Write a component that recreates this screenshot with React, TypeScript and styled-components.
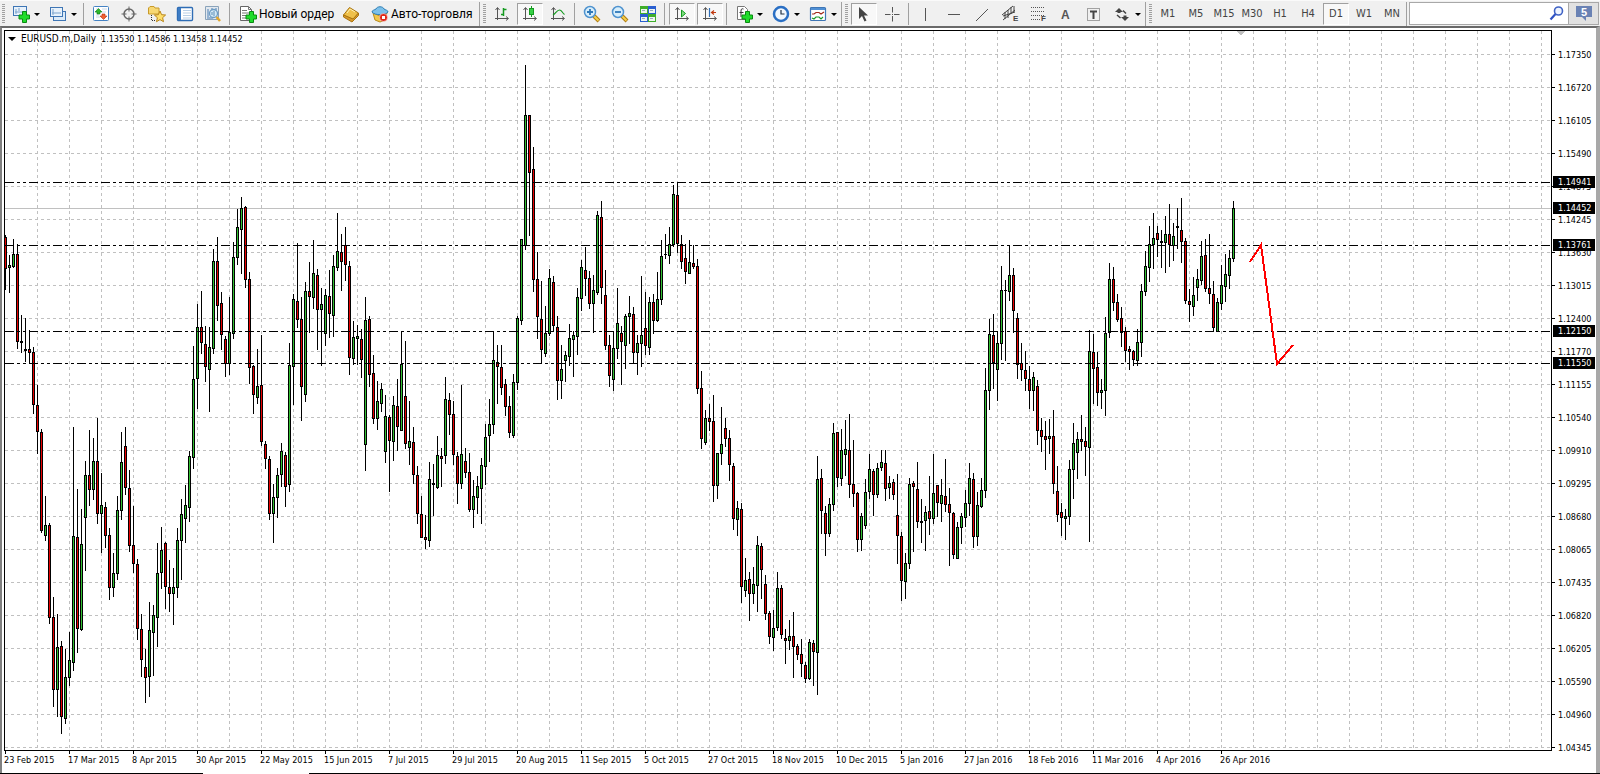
import React from "react";
import styled, { createGlobalStyle } from "styled-components";

const Global = createGlobalStyle`
  * { box-sizing: border-box; }
  body { margin: 0; background: #fff; }
`;

const UI_FONT = 'Roboto, "Noto Sans", sans-serif';
const CHART_FONT = '"DejaVu Sans Condensed", "DejaVu Sans", sans-serif';

const Page = styled.div`
  display: flex;
  flex-direction: column;
  min-height: 100vh;
  font-family: ${UI_FONT};
`;

const Toolbar = styled.header`
  display: flex;
  height: 26px;
  padding-top: 1px;
  background: #f0f0f0;
  border-top: 1px solid #fafafa;
`;

const Section = styled.div`
  display: flex;
  flex: none;
  align-items: center;
  border-right: 1px solid #a0a0a0;
  margin-right: 1px;
`;

const Grip = styled.span`
  width: 3px;
  height: 20px;
  margin: 0 2px;
  background: repeating-linear-gradient(#a0a0a0 0 1px, #f0f0f0 1px 2px);
`;

const Separator = styled.span`
  width: 1px;
  height: 22px;
  margin: 0 3px 0 2px;
  background: #a0a0a0;
`;

const ToolButton = styled.button<{ $pressed?: boolean; $wide?: boolean }>`
  display: flex;
  align-items: center;
  justify-content: center;
  gap: 4px;
  width: ${(p) => (p.$wide ? "37px" : "26px")};
  height: 22px;
  margin: 0 ${(p) => (p.$wide ? "0" : "1px")};
  padding: 0;
  border: 1px solid;
  border-color: ${(p) => (p.$pressed ? "#a0a0a0 #fff #fff #a0a0a0" : "transparent")};
  background: ${(p) => (p.$pressed ? "#f8f8f8" : "transparent")};
  color: #444;
  font: 11px/16px ${CHART_FONT};
`;

const TextButton = styled.button<{ $width: number }>`
  display: flex;
  align-items: center;
  gap: 2px;
  width: ${(p) => p.$width}px;
  height: 22px;
  padding: 0 0 0 6px;
  border: 0;
  background: transparent;
  color: #000;
  font: 12px/16px ${UI_FONT};
  white-space: nowrap;
`;

const Caret = styled.span`
  border: 3px solid transparent;
  border-top-color: #000;
  border-bottom: 0;
`;

const SearchBox = styled.label`
  display: flex;
  flex: 1;
  min-width: 0;
  align-items: center;
  margin: 0 0 1px 1px;
  padding-right: 2px;
  border: 1px solid #a8a8a8;
  background: #fff;
`;

const SearchInput = styled.input`
  flex: 1;
  width: 0;
  min-width: 0;
  border: 0;
  outline: 0;
  background: transparent;
  font: 12px/16px ${UI_FONT};
`;

const MessageButton = styled.button`
  display: flex;
  flex: none;
  align-items: center;
  justify-content: center;
  width: 30px;
  margin: 0 1px 1px 0;
  padding: 0;
  border: 1px solid #a8a8a8;
  border-left: 0;
  background: #e1e1e1;
`;

const Workspace = styled.main`
  display: grid;
  flex: 1;
  grid-template-columns: 1fr 44px;
  grid-template-rows: 1fr 22px;
  padding: 2px 0 0 2px;
  border-top: 2px solid #696969;
  border-left: 2px solid #808080;
  border-right: 4px solid #a8a8a8;
  background: #fff;
  color: #000;
  font: 9px/12px ${CHART_FONT};
`;

const TabStrip = styled.div`
  height: 1px;
  padding-left: 203px;
  background: #000;
`;

const ActiveTab = styled.div`
  width: 106px;
  height: 1px;
  background: #fff;
`;

const Plot = styled.section`
  position: relative;
  min-width: 0;
  border: 1px solid #000;
  overflow: hidden;
`;

const PlotSvg = styled.svg`
  display: block;
  width: 100%;
  height: 719px;
`;

const Quote = styled.h1`
  position: absolute;
  top: 2px;
  left: 3px;
  display: flex;
  align-items: center;
  gap: 5px;
  margin: 0;
  font: inherit;
  white-space: pre;
`;

const Symbol = styled.span`
  font-size: 10px;
`;

const QuoteCaret = styled.span`
  border: 4px solid transparent;
  border-top-color: #000;
  border-bottom: 0;
`;

const PriceAxis = styled.aside`
  position: relative;
  grid-row: span 2;
  height: 0;
  padding-top: 8px;
`;

const PriceLabel = styled.div`
  display: flex;
  align-items: center;
  gap: 3px;
  height: 33px;
  &::before {
    content: "";
    width: 3px;
    height: 1px;
    background: #000;
  }
`;

const PriceTag = styled.div<{ $y: number }>`
  position: absolute;
  top: ${(p) => p.$y - 36}px;
  left: 1px;
  right: 1px;
  padding-left: 5px;
  background: #000;
  color: #fff;
`;

const DateAxis = styled.footer`
  display: flex;
  min-width: 0;
  overflow: hidden;
`;

const DateLabel = styled.span`
  flex: none;
  width: 64px;
  white-space: nowrap;
  &::before {
    content: "";
    display: block;
    width: 1px;
    height: 3px;
    margin-left: 1px;
    background: #000;
  }
`;

const prices = [
  "1.17350", "1.16720", "1.16105", "1.15490", "1.14875", "1.14245", "1.13630", "1.13015",
  "1.12400", "1.11770", "1.11155", "1.10540", "1.09910", "1.09295", "1.08680", "1.08065",
  "1.07435", "1.06820", "1.06205", "1.05590", "1.04960", "1.04345",
];

const dates = [
  "23 Feb 2015", "17 Mar 2015", "8 Apr 2015", "30 Apr 2015", "22 May 2015", "15 Jun 2015",
  "7 Jul 2015", "29 Jul 2015", "20 Aug 2015", "11 Sep 2015", "5 Oct 2015", "27 Oct 2015",
  "18 Nov 2015", "10 Dec 2015", "5 Jan 2016", "27 Jan 2016", "18 Feb 2016", "11 Mar 2016",
  "4 Apr 2016", "26 Apr 2016",
];

const levels: [number, string][] = [
  [182, "1.14941"],
  [245, "1.13761"],
  [331, "1.12150"],
  [363, "1.11550"],
];
const bid: [number, string] = [208, "1.14452"];

// Daily candles: direction (g rises, r falls), then high, body top, body bottom, low.
const series = `
r235,237,269,290 g255,265,268,293 g239,254,267,268 r244,254,342,349 r315,341,343,353 g318,349,351,362 r330,349,353,364 r347,352,405,414
r385,405,432,454 r429,432,531,533 g496,525,536,541 r523,525,618,624 r597,617,690,707 g614,647,690,717 r641,646,717,734 g649,677,719,724
g632,660,678,686 g427,536,663,671 r489,537,629,653 g509,544,630,631 g461,475,518,571 r430,475,490,506 g438,461,490,500 r418,461,514,524
g473,505,514,553 r502,507,536,548 r528,535,588,600 g553,573,588,597 g496,510,574,580 g432,462,511,520 r427,446,488,495 r470,488,546,552
r506,545,564,573 r559,564,629,640 r614,629,660,677 r649,667,678,703 g602,630,677,697 g605,615,633,676 g543,573,618,647 g527,550,573,589
r542,543,587,609 r560,587,594,612 g568,587,594,625 g528,540,588,598 g499,514,541,580 g485,505,519,543 g451,456,508,522 g346,379,458,469
g304,327,379,409 r291,327,343,354 r326,344,367,382 g327,347,370,412 g249,261,349,354 r237,261,306,321 r292,303,335,350 r336,339,364,377
g297,332,364,375 g242,257,334,339 g209,227,258,265 g197,208,230,274 r206,207,280,288 r272,279,368,384 r365,366,395,414 g349,386,398,404
r335,385,442,446 r441,444,459,469 r456,459,514,520 g484,497,514,543 g468,475,498,518 g443,451,475,487 r452,455,487,507 g343,365,485,492
g294,299,367,405 r243,301,320,328 r297,319,387,421 g282,291,395,402 r262,291,297,333 g240,273,298,309 r269,275,310,350 g288,304,310,366
g289,295,334,346 r270,296,314,338 g255,266,316,337 g213,251,268,271 r234,252,262,291 r227,245,265,281 r261,266,358,375 g321,337,359,365
g325,336,339,365 r329,339,360,378 g297,320,445,471 r316,319,375,387 r355,373,419,424 g381,401,419,430 g383,389,404,412 g395,416,452,463
r415,417,441,492 g396,405,442,461 r379,406,427,451 g331,364,431,431 r341,396,444,449 g401,441,448,465 r427,442,475,484 r466,475,514,524
r496,514,538,538 r515,537,540,549 g462,479,541,547 g464,483,485,516 g436,455,488,489 r448,456,459,487 g377,399,456,464 r393,400,415,435
r401,414,455,465 r452,456,484,504 g385,454,484,489 r448,461,473,478 r453,472,510,512 g480,496,510,528 g476,486,498,514 g458,465,489,524
g424,437,467,485 g399,424,436,462 g331,360,425,434 r345,362,367,404 r345,367,388,395 r379,384,407,416 r396,406,433,438 g374,382,436,438
g316,318,383,390 g239,239,321,325 g65,115,246,250 r115,115,173,236 r147,169,280,292 r252,279,317,339 r281,319,350,364 g306,333,354,357
g269,278,334,336 r276,282,326,331 r316,327,381,400 g345,369,381,399 g351,355,361,382 g324,338,357,366 g331,335,340,377 g288,297,337,355
g260,267,299,311 r247,270,279,296 r271,278,304,309 g275,290,304,333 g211,215,293,295 r201,217,288,304 r270,295,346,350 r335,345,376,387
g331,348,380,391 g288,323,349,359 r326,333,342,385 g314,316,346,369 g296,313,317,344 r307,314,353,364 g335,343,353,375 g276,335,344,367
r292,328,346,355 g297,302,348,355 r294,302,321,334 g272,299,321,322 g240,256,300,305 g234,254,255,259 g227,244,256,264 g185,194,245,247
r183,195,244,253 r235,244,262,269 r244,258,272,284 g240,262,274,274 r245,263,267,269 r259,266,389,394 r371,388,439,449 g410,418,443,445
r404,418,422,431 r395,421,486,502 g453,453,486,499 g407,444,454,465 r418,428,439,447 r430,438,465,481 r463,466,519,530 g501,508,520,536
r503,509,587,603 g558,580,591,597 r572,579,594,621 g567,584,594,604 g536,545,586,612 r543,546,570,599 r575,584,614,620 r611,613,637,644
g610,628,638,651 g572,588,628,631 r585,588,635,639 r629,638,641,664 g620,636,641,650 r612,636,647,678 r644,646,655,660 r639,654,664,677
r662,665,679,683 g639,642,679,680 r640,643,652,686 g456,479,653,695 r469,478,511,534 r506,513,534,556 g498,504,534,537 g423,433,505,511
r432,432,478,487 g429,450,479,486 g420,449,455,476 r414,450,485,498 r440,484,494,507 r492,493,540,552 g513,516,540,551 g479,492,526,529
g454,469,492,499 r469,471,495,516 g463,468,495,498 g450,462,468,471 r450,463,489,501 g476,483,488,499 r479,482,495,500 r474,515,536,564
r532,536,581,601 g553,563,582,599 g478,484,564,569 r481,483,487,552 r462,489,522,528 r499,521,523,543 g506,512,521,551 r476,511,519,535
g454,493,519,524 r485,485,503,517 g479,495,504,522 r459,496,505,512 r488,504,513,566 r512,513,555,559 g522,527,559,559 g513,516,528,544
g490,503,518,527 g463,478,504,516 r473,479,537,548 g492,505,537,546 g478,490,507,508 g368,390,491,498 g319,334,391,410 r314,335,363,389
g331,343,370,401 g266,290,344,360 g280,290,291,361 g245,275,292,301 r268,275,311,333 r313,318,365,379 r343,363,370,381 r351,370,379,391
r366,379,391,409 g372,377,391,411 r380,386,431,445 r418,430,437,452 r421,436,440,470 g419,436,439,454 r410,436,484,494 r466,491,515,522
r503,512,518,536 g509,516,519,540 g460,469,517,525 g423,443,470,499 g432,439,453,479 r415,439,442,451 r427,441,447,476 g330,351,448,542
r334,352,369,404 r352,367,393,406 g379,390,393,409 g317,333,391,416 g263,279,333,338 r267,279,303,311 r294,302,320,322 r307,318,333,347
r327,331,351,362 r346,349,352,370 r350,351,360,366 g329,342,361,366 g284,291,343,357 g251,266,292,296 g226,244,268,282 g213,238,245,269
r226,233,240,257 r230,241,243,268 g216,234,243,273 r204,234,245,267 g223,236,246,261 g208,226,228,249 r198,230,242,263 r238,241,301,304
r289,301,305,322 g277,295,307,316 g269,279,288,301 g241,256,281,285 r239,255,289,292 r234,288,294,304 r281,294,328,332 g298,302,332,332
g265,285,304,310 g254,274,287,302 g250,258,276,289 g201,208,259,262
`;

const candles = series
  .trim()
  .split(/\s+/)
  .map((entry, index) => {
    const [high, top, bottom, low] = entry.slice(1).split(",").map(Number);
    return { x: index * 4, up: entry[0] === "g", high, top, bottom, low };
  });

const STEP = 4;
const PLOT_TOP = 31;

const Candles = () => (
  <g>
    {candles.map((c) => (
      <g key={c.x}>
        <rect x={c.x} y={c.high} width={1} height={c.low - c.high} fill="#000" />
        <rect x={c.x - 1} y={c.top} width={3} height={c.bottom - c.top} fill="#000" />
        {c.bottom - c.top > 2 && (
          <rect x={c.x} y={c.top + 1} width={1} height={c.bottom - c.top - 2} fill={c.up ? "#32c032" : "#e80000"} />
        )}
      </g>
    ))}
  </g>
);

const Chart = () => (
  <PlotSvg role="img" aria-label="EURUSD daily candlestick chart" shapeRendering="crispEdges">
    <g transform={`translate(0 ${-PLOT_TOP})`}>
      {Array.from({ length: 60 }, (_, i) => (
        <line key={i} x1={(i + 1) * STEP * 8 + 0.5} x2={(i + 1) * STEP * 8 + 0.5} y1={31} y2={750} stroke="#c0c0c0" strokeDasharray="3 3" />
      ))}
      {prices.map((p, i) => (
        <line key={p} x1="0" x2="100%" y1={54.5 + i * 33} y2={54.5 + i * 33} stroke="#c0c0c0" strokeDasharray="3 3" />
      ))}
      <line x1="0" x2="100%" y1={bid[0] + 0.5} y2={bid[0] + 0.5} stroke="#c0c0c0" />
      <Candles />
      {levels.map(([y]) => (
        <line key={y} x1="0" x2="100%" y1={y + 0.5} y2={y + 0.5} stroke="#000" strokeDasharray="9 3 3 3 3 3" />
      ))}
      <path d="M1231 31h9l-4.500 4.500z" fill="#c0c0c0" />
      <path d="M1245 262 1256 245 1272 364 1288 345" fill="none" stroke="#f00" strokeWidth="2" />
    </g>
  </PlotSvg>
);

const Icon = ({ children, size = 18 }: { children: React.ReactNode; size?: number }) => (
  <svg width={size} height={18} viewBox={`0 0 ${size} 18`} fill="none" aria-hidden="true">
    {children}
  </svg>
);

const Plus = () => <path d="M10.500 6.500h4v3.500h3v4h-3v3.500h-4V14H7v-4h3.500z" fill="#1fdc2a" stroke="#0a8a12" />;
const Axes = () => (
  <path d="M4.500 15V3M2.500 5l2-2.500 2 2.500M2 13.500h13M13 11.500l2.500 2-2.500 2" stroke="#555" />
);

const NewChartIcon = () => (
  <Icon>
    <rect x="1.500" y="1.500" width="13" height="9" fill="#e8f2fb" stroke="#3f76b5" />
    <path d="M4 4v5M3 7h9M7 3v3" stroke="#7aa3cc" />
    <Plus />
  </Icon>
);
const ProfilesIcon = () => (
  <Icon>
    <rect x="4.500" y="6.500" width="12" height="9" fill="#dcebf8" stroke="#3f76b5" />
    <rect x="1.500" y="2.500" width="12" height="9" fill="#e8f2fb" stroke="#3f76b5" />
    <path d="M4 4v6M3 8h9" stroke="#7aa3cc" />
  </Icon>
);
const MarketIcon = () => (
  <Icon>
    <rect x="1.500" y="1.500" width="15" height="14" rx="1" fill="#fff" stroke="#4583c4" />
    <path d="M4 4h2M10 4h5M4 7h1M10 7h4M4 12h4M4 10h3" stroke="#c8d8e8" />
    <path d="M6.500 3.500 10 7H8v2H5V7H3z" fill="#2eb82e" stroke="#0a7a12" strokeWidth=".6" />
    <path d="M11.500 14.500 8 11h2V9h3v2h2z" fill="#f06030" stroke="#b83010" strokeWidth=".6" />
  </Icon>
);
const DataWindowIcon = () => (
  <Icon>
    <circle cx="9" cy="9" r="5" stroke="#666" strokeWidth="1.500" />
    <path d="M9 1.500v5M9 11.500v5M1.500 9h5M11.500 9h5" stroke="#666" />
  </Icon>
);
const NavigatorIcon = () => (
  <Icon size={20}>
    <path d="M1.500 3 3 1.500h4L8 3h4v6H1.500z" fill="#f7d873" stroke="#c89a2a" />
    <path d="M4.500 10v6M5 15.500h3" stroke="#333" strokeDasharray="1 1" />
    <path d="m13 6 1.600 3.700 4 .300-3 2.700.900 4-3.500-2.100-3.500 2.100.900-4-3-2.700 4-.300z" fill="#ffdf6b" stroke="#b9861a" />
  </Icon>
);
const TerminalIcon = () => (
  <Icon>
    <rect x="1.500" y="2.500" width="15" height="13" rx="1" fill="#fff" stroke="#2f6db5" strokeWidth="1.400" />
    <path d="M2 3h3v12H2z" fill="#3d7cc4" />
    <path d="M7 5.500h8M7 8h8M7 10.500h8M7 13h8" stroke="#b9cfe6" />
  </Icon>
);
const TesterIcon = () => (
  <Icon>
    <path d="M1.500 1.500h13v13h-13z" fill="#e2e8ee" stroke="#8aa3ba" />
    <path d="M4 4v8M8 3v3M12 3v5M3 13h6" stroke="#4a7fb5" />
    <circle cx="9.500" cy="8.500" r="4" fill="#d4eaf8" stroke="#6d9cc4" strokeWidth="1.300" />
    <path d="M8 7v3M10 6v5" stroke="#5d8cb4" />
    <path d="m12.500 12 3.500 4" stroke="#e0a52c" strokeWidth="2.500" />
  </Icon>
);
const OrderIcon = () => (
  <Icon>
    <path d="M1.500 1.500h8l3 3v11h-11z" fill="#fff" stroke="#666" />
    <path d="M9.500 1.500v3h3M3 5.500h5M3 8h7M3 10.500h4M3 13h4" stroke="#777" />
    <Plus />
  </Icon>
);
const EditorIcon = () => (
  <Icon>
    <path d="m1.500 10 6-7.500 9 5.500-5.500 6.500z" fill="#efc04a" stroke="#a87410" />
    <path d="m1.500 10v2l8.500 5 6.500-6.500V8L11 14z" fill="#d9982a" stroke="#a87410" />
    <path d="m5 8 3-4 5 3" stroke="#fff0b0" />
  </Icon>
);
const AutoIcon = () => (
  <Icon>
    <path d="m2 8 7 3 7-3-2 7-5 2-5-2z" fill="#f2c84b" stroke="#b98a1a" />
    <path d="M1 7c0-2 3-2 4-3 1-3 7-3 8 0 1 1 4 1 4 3-2 3-13 4-16 0z" fill="#7cc0ea" stroke="#2f7fb5" />
    <circle cx="12.500" cy="12.500" r="4" fill="#e02a1a" stroke="#fff" strokeWidth=".5" />
    <rect x="11" y="11" width="3" height="3" fill="#fff" />
  </Icon>
);
const BarsIcon = () => (
  <Icon><Axes /><path d="M10.500 3v8M10.500 4.500h3M8 9.500h2.500" stroke="#159a20" strokeWidth="1.500" /></Icon>
);
const CandleIcon = () => (
  <Icon><Axes /><path d="M10.500 1v11" stroke="#159a20" /><rect x="8.500" y="3.500" width="4" height="6" fill="#35d045" stroke="#159a20" /></Icon>
);
const LineIcon = () => (
  <Icon><Axes /><path d="M4 10C7 8 8 5 10.500 5S13 8 15.500 9.500" stroke="#159a20" strokeWidth="1.200" /></Icon>
);
const ZoomIcon = ({ plus }: { plus?: boolean }) => (
  <Icon>
    <path d="m11 11 5 5" stroke="#b07c10" strokeWidth="4" />
    <path d="m11 11 4.500 4.500" stroke="#f5cf4a" strokeWidth="2" />
    <circle cx="7" cy="7" r="5.500" fill="#d8eefb" stroke="#4f93cf" strokeWidth="1.500" />
    <path d={plus ? "M4 7h6M7 4v6" : "M4 7h6"} stroke="#2f78b8" strokeWidth="1.800" />
  </Icon>
);
const TileIcon = () => (
  <Icon>
    <path d="M1 1h8v8H1zM9 9h8v8H9z" fill="#3fae2a" />
    <path d="M9 1h8v8H9zM1 9h8v8H1z" fill="#2a5fd0" />
    <path d="M2 4h6v4H2zM10 4h6v4h-6zM2 12h6v4H2zM10 12h6v4h-6z" fill="#eef6f0" />
    <path d="M3 5.500h3M11 5.500h3M3 13.500h3M11 13.500h3" stroke="#9ab" />
  </Icon>
);
const ScrollIcon = () => (
  <Icon><Axes /><path d="m8.500 5 4 3.500-4 3.500z" fill="#7fdc7f" stroke="#159a20" /></Icon>
);
const ShiftIcon = () => (
  <Icon><Axes /><path d="M8.500 3v9" stroke="#2f6db5" strokeWidth="1.200" /><path d="M15 7.500h-4M13 5.500l-2.500 2 2.500 2" stroke="#c03a10" strokeWidth="1.200" /></Icon>
);
const IndicatorIcon = () => (
  <Icon>
    <path d="M2.500 1.500h7l3 3v10h-10z" fill="#fff" stroke="#777" />
    <path d="M8.500 4c-2-.800-2.500.500-2.500 2v6M4.500 7.500h4" stroke="#333" />
    <Plus />
  </Icon>
);
const ClockIcon = () => (
  <Icon>
    <circle cx="9" cy="9" r="7" fill="#f2f8fe" stroke="#2a6fc4" strokeWidth="2.500" />
    <path d="M9 5v4h3.500" stroke="#234" strokeWidth="1.200" />
  </Icon>
);
const TemplateIcon = () => (
  <Icon>
    <rect x="1.500" y="2.500" width="15" height="13" rx="1" fill="#fff" stroke="#3f76b5" strokeWidth="1.200" />
    <path d="M2 3h14v2H2z" fill="#4f8fd4" />
    <path d="M3 9h2l2-1.500h3L12 9l3-2" stroke="#a02a1a" strokeWidth="1.200" />
    <path d="m3 13 2 1 2-2h3l2 2 2-2" stroke="#1a9a2a" strokeWidth="1.200" />
  </Icon>
);
const CursorIcon = () => <Icon><path d="M4 2v12l3-3 2.500 5.500 2-1L9 10.500h4z" fill="#444" /></Icon>;
const CrossIcon = () => <Icon><path d="M9.500 2v5.500M9.500 11v5.500M2 9.500h5.500M11 9.500h5.500M9 9.500h1" stroke="#555" /></Icon>;
const VLineIcon = () => <Icon><path d="M8.500 3v13" stroke="#555" /></Icon>;
const HLineIcon = () => <Icon><path d="M3 9.500h12" stroke="#555" /></Icon>;
const TrendIcon = () => <Icon><path d="m3 16 12-12" stroke="#555" /></Icon>;

const glyph = { fill: "#444", fontFamily: "Liberation Sans, sans-serif", fontWeight: 700 } as const;

const ChannelIcon = () => (
  <Icon>
    <path d="M1 10 12 1M2 15 14 5M4 14V7M7 13V5M10 9V2M13 7V1M2 11l12-4" stroke="#444" />
    <text x="12" y="16" fontSize="8" {...glyph}>E</text>
  </Icon>
);
const FiboIcon = () => (
  <Icon>
    <path d="M2 2.500h14M2 6.500h14M2 10.500h14M2 14.500h9" stroke="#555" strokeDasharray="1 1" />
    <text x="12" y="16" fontSize="8" {...glyph}>F</text>
  </Icon>
);
const TextIcon = () => <Icon><text x="4" y="14" fontSize="12" {...glyph} fill="#555">A</text></Icon>;
const LabelIcon = () => (
  <Icon>
    <rect x="2.500" y="3.500" width="12" height="12" stroke="#555" strokeDasharray="1 1" />
    <path d="M5 6.500h7M8.500 6v8" stroke="#444" strokeWidth="2" />
  </Icon>
);
const ArrowsIcon = () => (
  <Icon>
    <path d="m6 3 4 4h-2.500v1h-3V7H2zM12 16l4-4h-2.500v-1.500h-3V12H8z" fill="#444" />
    <path d="m4 10 3.500 3M10 5.500l3 3" stroke="#444" strokeWidth="1.500" />
  </Icon>
);
const SearchIcon = () => (
  <Icon>
    <circle cx="10.500" cy="6" r="4" stroke="#3f62c4" strokeWidth="1.600" fill="#eef4ff" />
    <path d="m7.500 9-5 5.500" stroke="#2f52c4" strokeWidth="2.200" />
  </Icon>
);
const MessageIcon = () => (
  <Icon>
    <path d="M1 1h16v11h-6v4l-4-4H1z" fill="#6a82b4" />
    <text x="6" y="11" fontSize="11" {...glyph} fill="#fff">5</text>
  </Icon>
);

type Tool = { label: string; icon?: React.ReactNode; menu?: boolean; pressed?: boolean; text?: string };

const Tools = ({ items }: { items: Tool[] }) => (
  <>
    {items.map((t) => (
      <ToolButton key={t.label} type="button" aria-label={t.label} $wide={t.menu} $pressed={t.pressed}>
        {t.icon}
        {t.text}
        {t.menu && <Caret />}
      </ToolButton>
    ))}
  </>
);

const periods = ["M1", "M5", "M15", "M30", "H1", "H4", "D1", "W1", "MN"];

export default function App() {
  return (
    <Page>
      <Global />
      <Toolbar>
        <Section>
          <Grip />
          <Tools items={[
            { label: "New chart", icon: <NewChartIcon />, menu: true },
            { label: "Profiles", icon: <ProfilesIcon />, menu: true },
          ]} />
          <Separator />
          <Tools items={[
            { label: "Market watch", icon: <MarketIcon /> },
            { label: "Data window", icon: <DataWindowIcon /> },
            { label: "Navigator", icon: <NavigatorIcon /> },
            { label: "Terminal", icon: <TerminalIcon /> },
            { label: "Strategy tester", icon: <TesterIcon /> },
          ]} />
          <Separator />
          <TextButton type="button" $width={104}><OrderIcon />Новый ордер</TextButton>
          <Tools items={[{ label: "Editor", icon: <EditorIcon /> }]} />
          <TextButton type="button" $width={114}><AutoIcon />Авто-торговля</TextButton>
        </Section>
        <Section>
          <Grip />
          <Tools items={[
            { label: "Bar chart", icon: <BarsIcon /> },
            { label: "Candlesticks", icon: <CandleIcon />, pressed: true },
            { label: "Line chart", icon: <LineIcon /> },
          ]} />
          <Separator />
          <Tools items={[
            { label: "Zoom in", icon: <ZoomIcon plus /> },
            { label: "Zoom out", icon: <ZoomIcon /> },
            { label: "Tile windows", icon: <TileIcon /> },
          ]} />
          <Separator />
          <Tools items={[
            { label: "Auto scroll", icon: <ScrollIcon />, pressed: true },
            { label: "Chart shift", icon: <ShiftIcon />, pressed: true },
          ]} />
          <Separator />
          <Tools items={[
            { label: "Indicators", icon: <IndicatorIcon />, menu: true },
            { label: "Periods", icon: <ClockIcon />, menu: true },
            { label: "Templates", icon: <TemplateIcon />, menu: true },
          ]} />
        </Section>
        <Section>
          <Grip />
          <Tools items={[
            { label: "Cursor", icon: <CursorIcon />, pressed: true },
            { label: "Crosshair", icon: <CrossIcon /> },
          ]} />
          <Separator />
          <Tools items={[
            { label: "Vertical line", icon: <VLineIcon /> },
            { label: "Horizontal line", icon: <HLineIcon /> },
            { label: "Trendline", icon: <TrendIcon /> },
            { label: "Equidistant channel", icon: <ChannelIcon /> },
            { label: "Fibonacci", icon: <FiboIcon /> },
            { label: "Text", icon: <TextIcon /> },
            { label: "Text label", icon: <LabelIcon /> },
            { label: "Arrows", icon: <ArrowsIcon />, menu: true },
          ]} />
        </Section>
        <Section>
          <Grip />
          <Tools items={periods.map((p) => ({ label: p, text: p, pressed: p === "D1" }))} />
        </Section>
        <SearchBox>
          <SearchInput type="search" aria-label="Search" />
          <SearchIcon />
        </SearchBox>
        <MessageButton type="button" aria-label="Messages"><MessageIcon /></MessageButton>
      </Toolbar>
      <Workspace>
        <Plot>
          <Chart />
          <Quote><QuoteCaret /><Symbol>EURUSD.m,Daily</Symbol>1.13530 1.14586 1.13458 1.14452</Quote>
        </Plot>
        <PriceAxis>
          {prices.map((p) => <PriceLabel key={p}>{p}</PriceLabel>)}
          {[...levels, bid].map(([y, text]) => <PriceTag key={text} $y={y}>{text}</PriceTag>)}
        </PriceAxis>
        <DateAxis>
          {dates.map((d) => <DateLabel key={d}>{d}</DateLabel>)}
        </DateAxis>
      </Workspace>
      <TabStrip><ActiveTab /></TabStrip>
    </Page>
  );
}
